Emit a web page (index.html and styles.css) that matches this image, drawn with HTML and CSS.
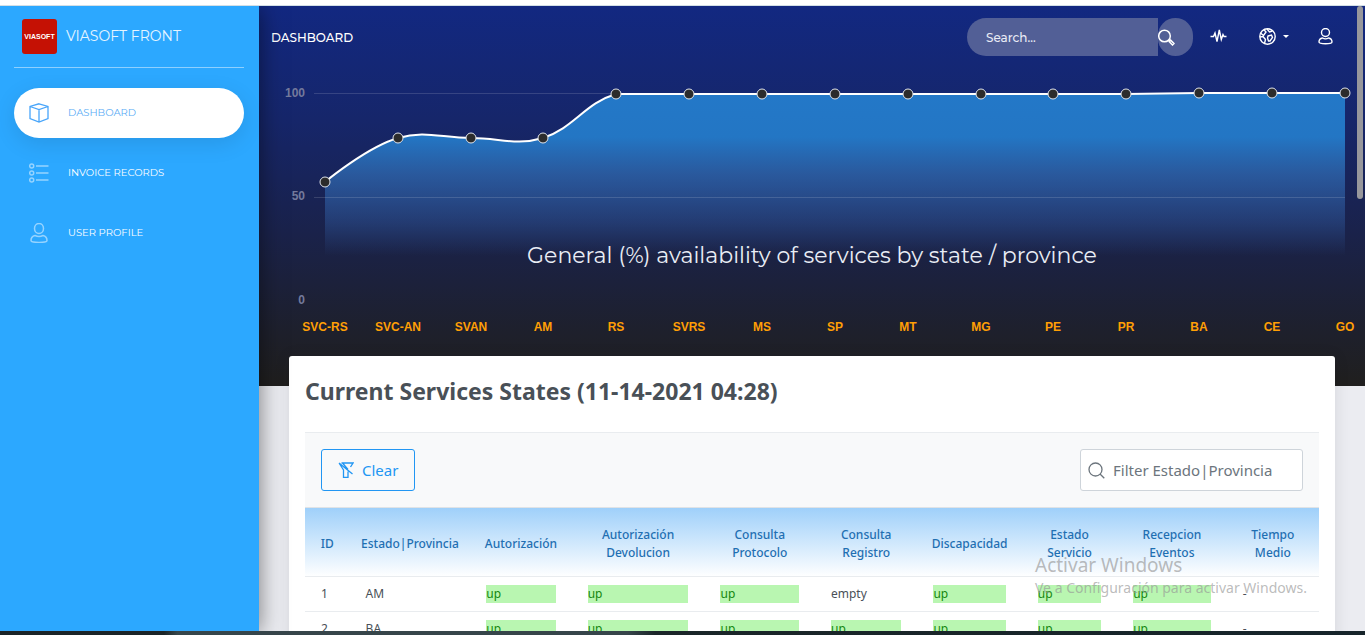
FILE: index.html
```html
<!DOCTYPE html>
<html lang="en">
<head>
<meta charset="utf-8">
<title>Viasoft Front - Dashboard</title>
<link rel="stylesheet" href="styles.css">
</head>
<body>
<div class="top-strip"></div>
<div class="app">
  <aside class="sidebar">
    <a class="brand" href="#">
      <svg class="brand-logo" viewBox="0 0 35 35" aria-hidden="true"><rect width="35" height="35" rx="3" fill="#c51104" stroke="none"/><text x="17.5" y="19.500" text-anchor="middle" class="logo-text">VIASOFT</text></svg>
      <span>VIASOFT FRONT</span>
    </a>
    <nav class="menu">
      <a class="menu-item active" href="#">
        <svg viewBox="0 0 20 20" aria-hidden="true"><path d="M10 .8 19 3.500V15.500L10 19 1 15.500V3.500ZM1 3.500 10 6.500 19 3.500M10 6.500V19"/></svg>
        <span>DASHBOARD</span>
      </a>
      <a class="menu-item" href="#">
        <svg viewBox="0 0 20 20" aria-hidden="true"><circle cx="2.700" cy="3" r="2"/><circle cx="2.700" cy="10" r="2"/><circle cx="2.700" cy="17" r="2"/><path d="M7 3H19.500M7 10H19.500M7 17H19.500"/></svg>
        <span>INVOICE RECORDS</span>
      </a>
      <a class="menu-item" href="#">
        <svg viewBox="0 0 20 20" aria-hidden="true"><ellipse cx="10" cy="5.500" rx="4.500" ry="5"/><path d="M6 12.500C3.500 13 2 15 2 17.500 2 18.700 5 19.400 10 19.400S18 18.700 18 17.500C18 15 16.500 13 14 12.500 11.500 13.800 8.500 13.800 6 12.500Z"/></svg>
        <span>USER PROFILE</span>
      </a>
    </nav>
  </aside>
  <main class="main">
    <section class="hero">
      <header class="navbar">
        <a class="page-name" href="#">DASHBOARD</a>
        <form class="search">
          <input type="text" placeholder="Search..." aria-label="Search">
          <button type="button" aria-label="Run search"><svg viewBox="0 0 17 17" aria-hidden="true"><circle cx="6.500" cy="7" r="5.800"/><path d="M10.500 11 12 12.500M12.600 11.100 16 14.500 14.500 16 11.100 12.600Z"/></svg></button>
        </form>
        <a class="nav-icon" href="#" aria-label="Activity"><svg viewBox="0 0 17 17" aria-hidden="true"><path d="M.5 8.500H3.500L5 5 7 13.500 9.300 2 11.300 11.500 13 6.500 14 8.500H16.500"/></svg></a>
        <a class="nav-icon globe" href="#" aria-label="Language"><svg viewBox="0 0 17 17" aria-hidden="true"><circle cx="8.500" cy="8.500" r="7.700"/><path d="M5 1.800 7 4 4.500 7.500 1.500 5M1 9 4 8.500 6.500 11.500 5.500 15.500M8 1 10.500 4 13.500 3M9 8 12.500 7 13.500 9.500 11 13H9.500L8.500 10Z"/></svg><i class="caret"></i></a>
        <a class="nav-icon" href="#" aria-label="Account"><svg viewBox="0 0 17 17" aria-hidden="true"><circle cx="8.500" cy="4.500" r="4"/><path d="M5.500 10C3 10.500 2 12.200 2 14 2 15.200 4.500 15.700 8.500 15.700S15 15.200 15 14C15 12.200 14 10.500 11.500 10 9.800 11 7.200 11 5.500 10Z"/></svg></a>
      </header>
      <svg class="chart" viewBox="0 0 1106 288" role="img" aria-label="General availability of services by state or province">
        <defs><linearGradient id="area" gradientUnits="userSpaceOnUse" x1="0" y1="25" x2="0" y2="188">
          <stop offset="0" stop-color="#2378c8"/><stop offset=".27" stop-color="#2376c4"/><stop offset=".5" stop-color="#2e66ad" stop-opacity=".8"/><stop offset=".8" stop-color="#3362aa" stop-opacity=".38"/><stop offset="1" stop-color="#3362aa" stop-opacity="0"/>
        </linearGradient></defs>
        <path fill="url(#area)" d="M66 114C66 114 108 79 139 70 166 62 183 70 212 70 241 70 257 78 284 70 315 60 326 35 357 26L867 26 940 25H1086V188H66Z"/>
        <path class="grid" d="M55 25.500H1086M55 129.500H1086"/>
        <path class="line" d="M66 114C66 114 108 79 139 70 166 62 183 70 212 70 241 70 257 78 284 70 315 60 326 35 357 26L867 26 940 25H1086"/>
        <g class="dots"><circle cx="66" cy="114" r="5"/><circle cx="139" cy="70" r="5"/><circle cx="212" cy="70" r="5"/><circle cx="284" cy="70" r="5"/><circle cx="357" cy="26" r="5"/><circle cx="430" cy="26" r="5"/><circle cx="503" cy="26" r="5"/><circle cx="576" cy="26" r="5"/><circle cx="649" cy="26" r="5"/><circle cx="722" cy="26" r="5"/><circle cx="794" cy="26" r="5"/><circle cx="867" cy="26" r="5"/><circle cx="940" cy="25" r="5"/><circle cx="1013" cy="25" r="5"/><circle cx="1086" cy="25" r="5"/></g>
        <g class="y-labels"><text x="46" y="29">100</text><text x="46" y="132">50</text><text x="46" y="236">0</text></g>
        <g class="x-labels"><text x="66" y="263">SVC-RS</text><text x="139" y="263">SVC-AN</text><text x="212" y="263">SVAN</text><text x="284" y="263">AM</text><text x="357" y="263">RS</text><text x="430" y="263">SVRS</text><text x="503" y="263">MS</text><text x="576" y="263">SP</text><text x="649" y="263">MT</text><text x="722" y="263">MG</text><text x="794" y="263">PE</text><text x="867" y="263">PR</text><text x="940" y="263">BA</text><text x="1013" y="263">CE</text><text x="1086" y="263">GO</text></g>
        <text class="chart-title" x="553" y="195">General (%) availability of services by state / province</text>
      </svg>
    </section>
    <section class="card">
      <h1>Current Services States (11-14-2021 04:28)</h1>
      <div class="toolbar">
        <button class="clear" type="button"><svg viewBox="0 0 16 16" aria-hidden="true"><path d="M3.500 1H15L12.500 5M1 1 14.500 12M1 1 5.500 8V15.300H10V9.500M4.500 1 10 7.500"/></svg>Clear</button>
        <label class="filter"><svg viewBox="0 0 17 17" aria-hidden="true"><circle cx="7.500" cy="7.500" r="6.500"/><path d="M12 12 16.300 16.300"/></svg><input type="text" placeholder="Filter Estado|Provincia" aria-label="Filter Estado|Provincia"></label>
      </div>
      <table>
        <colgroup><col class="c-id"><col class="c-state"><col class="c-auth"><col class="c-return"><col class="c-protocol"><col class="c-record"><col class="c-disability"><col class="c-service"><col class="c-events"><col class="c-time"></colgroup>
        <thead><tr><th>ID</th><th>Estado|Provincia</th><th>Autorización</th><th>Autorización Devolucion</th><th>Consulta Protocolo</th><th>Consulta Registro</th><th>Discapacidad</th><th>Estado Servicio</th><th>Recepcion Eventos</th><th>Tiempo Medio</th></tr></thead>
        <tbody>
          <tr><td>1</td><td>AM</td><td><div class="up">up</div></td><td><div class="up">up</div></td><td><div class="up">up</div></td><td>empty</td><td><div class="up">up</div></td><td><div class="up">up</div></td><td><div class="up">up</div></td><td>-</td></tr>
          <tr><td>2</td><td>BA</td><td><div class="up">up</div></td><td><div class="up">up</div></td><td><div class="up">up</div></td><td><div class="up">up</div></td><td><div class="up">up</div></td><td><div class="up">up</div></td><td><div class="up">up</div></td><td>-</td></tr>
        </tbody>
      </table>
    </section>
    <div class="scroll-thumb"></div>
  </main>
</div>
<div class="taskbar"></div>
<div class="watermark"><p class="wm-title">Activar Windows</p><p>Ve a Configuración para activar Windows.</p></div>
</body>
</html>
```
FILE: styles.css
```css
* { box-sizing: border-box; }
body {
  margin: 0;
  height: 100vh;
  overflow: hidden;
  display: flex;
  flex-direction: column;
  font-family: "Segoe UI", "Noto Sans", sans-serif;
  color: #495057;
}
a { color: inherit; text-decoration: none; }
svg { fill: none; stroke: currentColor; }
button, input { font: inherit; }
.top-strip { position: relative; z-index: 3; flex: none; height: 6px; background: #fff; border-bottom: 1px solid #d3dfe6; }
.taskbar { position: relative; z-index: 3; flex: none; height: 4px; background: linear-gradient(90deg, #1b2427 12%, #36454a 13%, #36454a 46%, #1b2629 48%, #16242a); }
.app { flex: 1; min-height: 0; display: flex; }

.sidebar {
  position: relative;
  z-index: 2;
  flex: none;
  width: 259px;
  padding: 0 15px 0 14px;
  background: #2ca8ff;
  color: #fff;
  font-family: Montserrat, Inter, sans-serif;
  box-shadow: 0 2px 22px rgba(0, 0, 0, .5);
}
.brand {
  display: flex;
  align-items: center;
  gap: 9px;
  height: 62px;
  padding: 0 8px 1px;
  border-bottom: 1px solid #8ed0ff;
  font-size: 14px;
  color: #e6f5ff;
}
.brand-logo { width: 35px; height: 35px; }
.logo-text { fill: #fff; stroke: none; font: bold 7px "Liberation Sans", sans-serif; }
.menu { display: flex; flex-direction: column; gap: 10px; padding-top: 20px; }
.menu-item {
  display: flex;
  align-items: center;
  gap: 19px;
  height: 50px;
  padding: 0 15px 1px;
  border-radius: 30px;
  font-size: 10px;
}
.menu-item svg { width: 20px; height: 20px; opacity: .5; stroke-width: 1.5; }
.menu-item.active { background: #fff; color: #5aacf5; box-shadow: 0 6px 22px rgba(0, 0, 0, .1); }
.menu-item.active svg { opacity: 1; color: #48a5fa; stroke-width: 1.3; }

.main { position: relative; flex: 1; min-width: 0; background: #ebecf1; overflow: hidden; }
.hero {
  padding-bottom: 30px;
  background: linear-gradient(180deg, #122881 0%, #16266a 30%, #1a224a 60%, #1e202c 86%, #201f1e 100%);
  color: #fff;
}
.navbar {
  display: flex;
  align-items: center;
  height: 62px;
  padding: 0 31px 0 12px;
  font-family: Montserrat, Inter, sans-serif;
}
.page-name { margin-right: auto; font-size: 12px; font-weight: 500; }
.search { display: flex; height: 38px; margin-right: 17px; }
.search input {
  width: 191px;
  padding: 0 19px;
  border: 0;
  border-radius: 30px 0 0 30px;
  background: #525f96;
  color: #fff;
  font-size: 12px;
  font-weight: 500;
}
.search input::placeholder { color: #e8ebf5; opacity: 1; }
.search button {
  display: flex;
  align-items: center;
  width: 35px;
  padding: 0;
  border: 0;
  border-radius: 30px;
  background: #525f96;
  color: #fff;
}
.search button svg, .nav-icon svg { width: 17px; height: 17px; stroke-width: 1.5; }
.nav-icon { display: flex; align-items: center; gap: 7px; margin-right: 32px; padding-bottom: 2px; }
.nav-icon.globe { margin-right: 28px; }
.nav-icon:last-child { margin-right: 0; }
.nav-icon svg { stroke-width: 1.4; }
.caret { border: 3px solid transparent; border-top-color: #fff; border-bottom: 0; }

.chart { display: block; width: 100%; height: auto; }
.chart path { stroke: none; }
.chart .grid { stroke: rgba(255, 255, 255, .14); }
.chart .line { stroke: #fff; stroke-width: 2; }
.dots { fill: #2c2c2c; stroke: #e1e5ec; stroke-width: 1; }
.chart text { stroke: none; }
.y-labels, .x-labels { font: bold 12px "Liberation Sans", Arial, sans-serif; }
.y-labels { fill: #747a9c; text-anchor: end; }
.x-labels { fill: #ff9f05; text-anchor: middle; }
.chart-title { fill: #e9edf5; text-anchor: middle; font: 22px Montserrat, Inter, sans-serif; }

.card {
  position: relative;
  margin: -30px 30px 0;
  padding: 16px 16px 40px;
  min-height: 320px;
  background: #fff;
  border-radius: 3px;
  box-shadow: 0 1px 15px rgba(39, 39, 39, .1);
}
h1 { margin: 0 0 22px; font-size: 23px; line-height: 38px; font-weight: 700; color: #495057; }
.toolbar {
  display: flex;
  justify-content: space-between;
  align-items: center;
  height: 76px;
  padding: 0 16px;
  background: #f8f9fa;
  border-top: 1px solid #e9ecef;
  border-bottom: 1px solid #e0e3e6;
}
.clear, .filter { height: 42px; border: 1px solid #2196f3; border-radius: 3px; font-size: 15px; }
.clear { display: flex; align-items: center; gap: 8px; padding: 0 16px; background: transparent; color: #2196f3; }
.clear svg { width: 16px; height: 16px; stroke-width: 1.3; }
.filter { display: flex; align-items: center; gap: 8px; width: 223px; padding: 0 7px; border-color: #ced4da; background: #fff; color: #6c757d; }
.filter svg { flex: none; width: 17px; height: 17px; stroke-width: 1.3; }
.filter input { width: 100%; min-width: 0; padding: 0; border: 0; background: transparent; }
.filter input::placeholder { color: #6c757d; opacity: 1; }

table { width: 100%; table-layout: fixed; border-collapse: separate; border-spacing: 0; font-size: 12px; line-height: 18px; }
.c-id { width: 4.4%; } .c-state { width: 11.9%; } .c-auth { width: 10%; } .c-return { width: 13.1%; } .c-protocol { width: 10.9%; }
.c-record { width: 10.1%; } .c-disability { width: 10.3%; } .c-service { width: 9.4%; } .c-events { width: 10.8%; } .c-time { width: 9.1%; }
thead { background: linear-gradient(180deg, #9fd0fa, #fff); }
th { height: 69px; padding: 3px 12px 0; border-bottom: 1px solid #e9ecef; color: #1f6fb2; font-weight: 500; white-space: normal; }
td { height: 35px; padding: 8px 16px; border-bottom: 1px solid #e9ecef; }
th:nth-child(2) { padding: 3px 0 0; }
.up { background: #b9f6b1; color: #14870f; }

.scroll-thumb { position: absolute; z-index: 3; top: 0; right: 2px; width: 6px; height: 193px; border-radius: 3px; background: #97979c; }
.watermark { position: absolute; z-index: 4; right: 55px; bottom: 36px; width: 275px; color: rgba(150, 150, 150, .65); font-size: 14px; line-height: 22px; white-space: nowrap; pointer-events: none; }
.watermark p { margin: 0; }
.watermark .wm-title { font-size: 19px; line-height: 24px; }
```
